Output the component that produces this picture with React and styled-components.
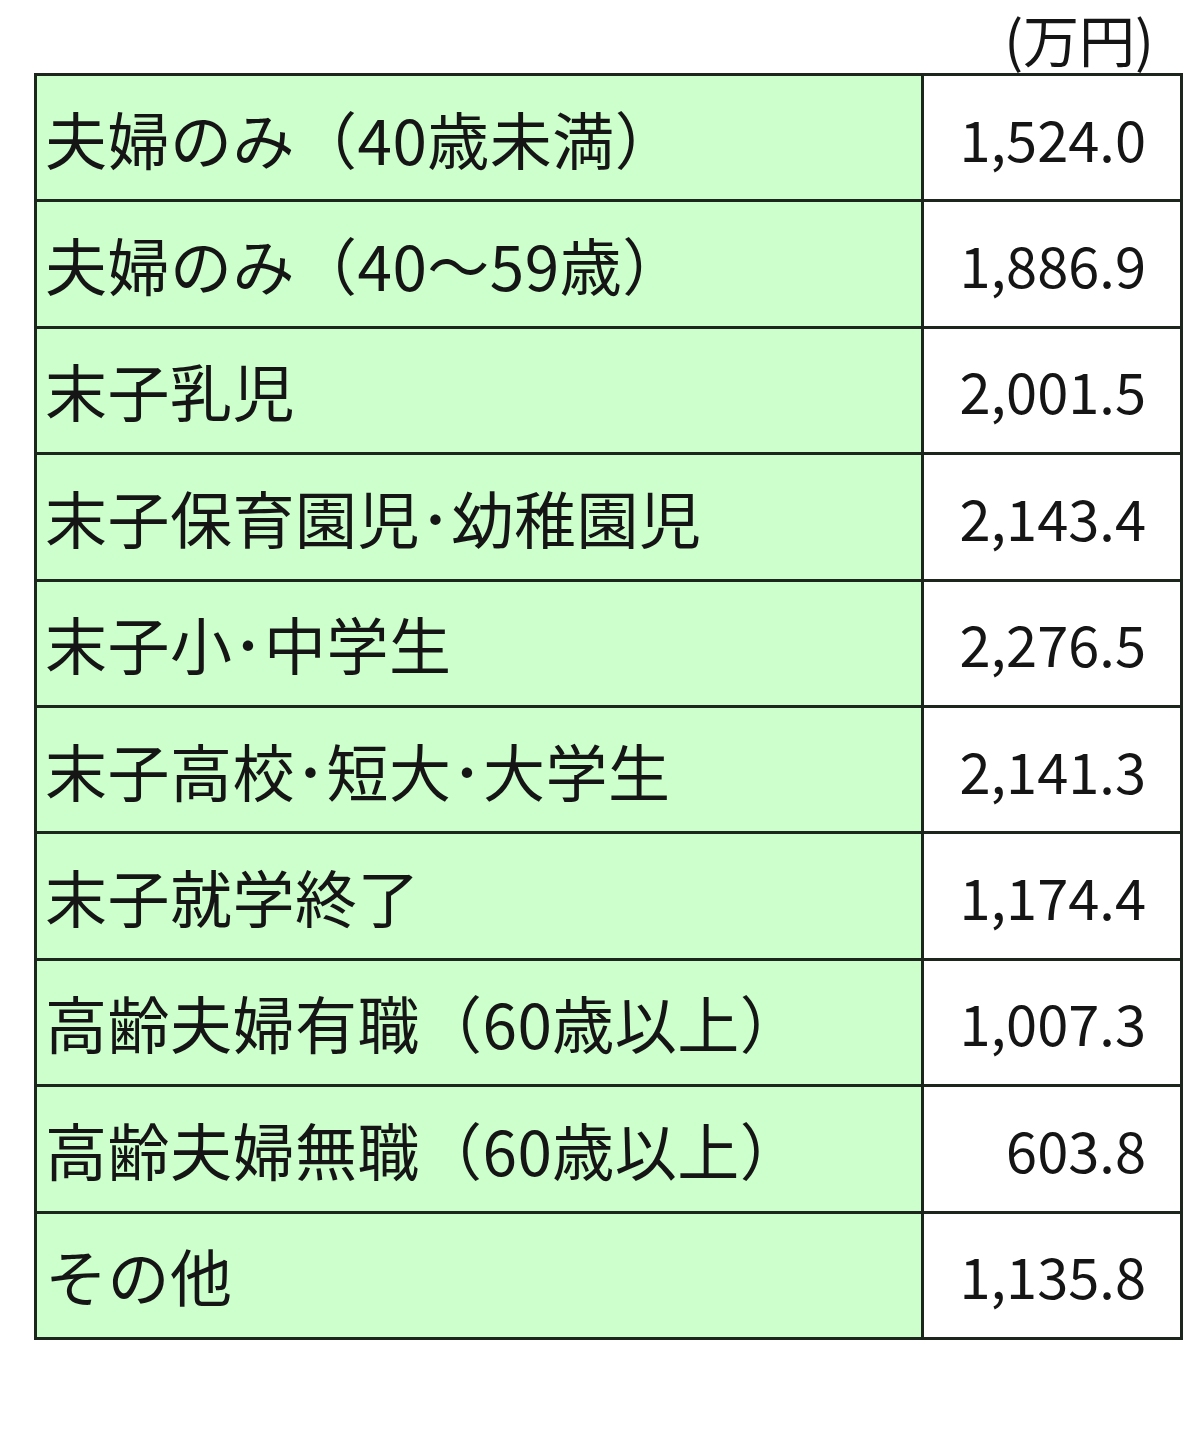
import React from "react";
import styled, { createGlobalStyle } from "styled-components";

const GlobalStyle = createGlobalStyle`
  html, body {
    margin: 0;
    padding: 0;
    background: #fff;
  }
  body {
    font-family: "Noto Sans CJK JP", "Noto Sans", sans-serif;
    color: #151515;
  }
`;

const Page = styled.div`
  width: 1200px;
  height: 1439px;
  padding-left: 34px;
  box-sizing: border-box;
`;

const Unit = styled.div`
  width: 1146px;
  height: 73px;
  box-sizing: border-box;
  display: flex;
  align-items: flex-end;
  justify-content: flex-end;
  padding-right: 26px;
  padding-bottom: 4px;
  font-size: 56px;
  line-height: 1.1;
  overflow: visible;
`;

const Table = styled.table`
  width: 1146px;
  table-layout: fixed;
  border-collapse: collapse;
  border: 3px solid #1c261c;
`;

const Col = styled.col`
  width: ${(p) => p.$w}px;
`;

const Row = styled.tr`
  height: 126.4px;
`;

const Label = styled.td`
  background: #ccffcc;
  border: 3px solid #1c261c;
  padding: 0 0 0 8px;
  font-size: 62px;
  line-height: 1;
  letter-spacing: 0.5px;
  white-space: nowrap;
  overflow: hidden;
`;

const Value = styled.td`
  background: #fff;
  border: 3px solid #1c261c;
  padding: 0 34px 0 0;
  text-align: right;
  font-size: 56px;
  line-height: 1;
  white-space: nowrap;
`;

const rows = [
  ["夫婦のみ（40歳未満）", "1,524.0"],
  ["夫婦のみ（40～59歳）", "1,886.9"],
  ["末子乳児", "2,001.5"],
  ["末子保育園児･幼稚園児", "2,143.4"],
  ["末子小･中学生", "2,276.5"],
  ["末子高校･短大･大学生", "2,141.3"],
  ["末子就学終了", "1,174.4"],
  ["高齢夫婦有職（60歳以上）", "1,007.3"],
  ["高齢夫婦無職（60歳以上）", "603.8"],
  ["その他", "1,135.8"],
];

export default function App() {
  return (
    <>
      <GlobalStyle />
      <Page>
        <Unit>(万円)</Unit>
        <Table>
          <colgroup>
            <Col $w={887} />
            <Col $w={259} />
          </colgroup>
          <tbody>
            {rows.map(([label, value]) => (
              <Row key={label}>
                <Label>{label}</Label>
                <Value>{value}</Value>
              </Row>
            ))}
          </tbody>
        </Table>
      </Page>
    </>
  );
}
